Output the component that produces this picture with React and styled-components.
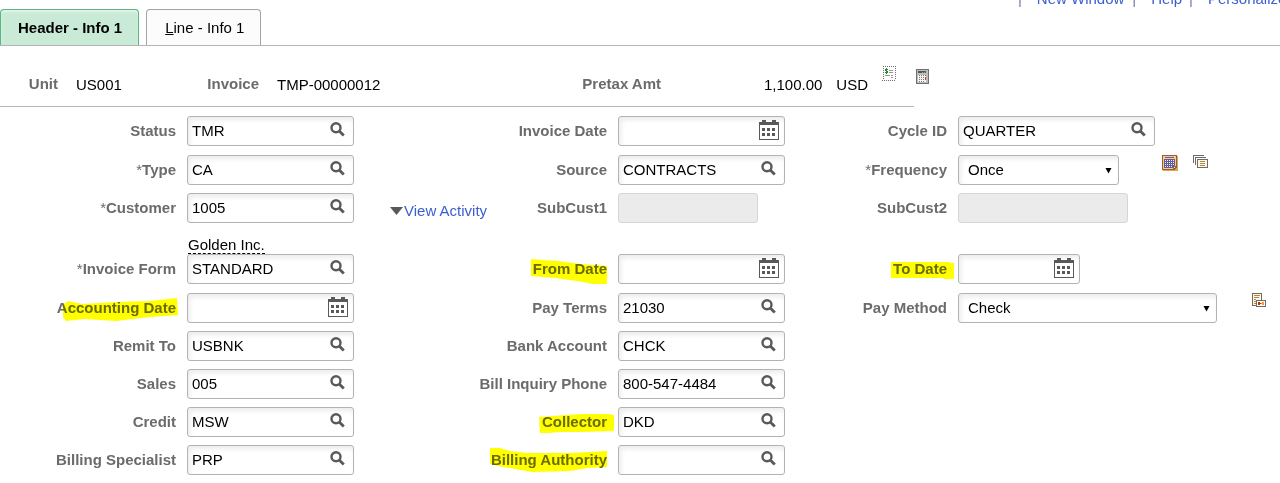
import React from 'react';
import styled, { createGlobalStyle, css } from 'styled-components';

const GlobalStyle = createGlobalStyle`
  * { box-sizing: border-box; }
  body {
    margin: 0;
    background: #fff;
    color: #000;
    font: 15px/18px "Liberation Sans", Arial, sans-serif;
    overflow-x: hidden;
  }
  button, input, select { font: inherit; color: inherit; }
`;

/* ---------- page header ---------- */

const UtilityBar = styled.nav`
  display: flex;
  justify-content: flex-end;
  align-items: flex-end;
  height: 9px;
  padding-bottom: 1px;
  overflow: hidden;
  color: #6f7fa8;
`;

const UtilityLink = styled.a`
  flex: none;
  width: ${(p) => p.$width || 'auto'};
  margin-left: ${(p) => p.$lead || '15px'};
  margin-right: ${(p) => p.$trail || '0'};
  color: #3c5fcf;
  text-decoration: none;
  white-space: nowrap;
`;

const TabBar = styled.div`
  display: flex;
  gap: 7px;
  border-bottom: 1px solid #b4b4b4;
`;

const Tab = styled.button`
  height: 36px;
  padding: 0 16px 0 18px;
  border: 1px solid #a3a3a3;
  border-bottom: 0;
  border-radius: 4px 4px 0 0;
  background: #fcfcfc;
  ${(p) => p.$active && css`
    padding: 0 16px 0 17px;
    border-color: #5bb583;
    background: #c8ead7;
    box-shadow: inset 0 2px 2px #e4f5eb;
    font-weight: bold;
  `}
`;

/* ---------- invoice summary ---------- */

const SummaryRow = styled.section`
  display: flex;
  align-items: flex-start;
  gap: 2px;
  margin-bottom: 9px;
`;

const Summary = styled.dl`
  flex: 0 1 914px;
  display: grid;
  grid-template-columns: 58px 112fr 53px 280fr 86px 235fr;
  column-gap: 18px;
  height: 61px;
  margin: 0;
  border-bottom: 1px solid #b4b4b4;
`;

const SummaryLabel = styled.dt`
  padding-top: 30px;
  color: #6b6b6b;
  font-weight: bold;
  line-height: 16px;
  text-align: right;
  white-space: nowrap;
`;

const SummaryValue = styled.dd`
  margin: 0;
  padding-top: 30px;
`;

const AmountValue = styled(SummaryValue)`
  display: flex;
  justify-content: flex-end;
  align-items: flex-start;
  gap: 14px;
  padding: 20px 18px 0 0;
`;

const AmountText = styled.span`
  padding-top: 10px;
`;

const IconButton = styled.button`
  flex: none;
  display: block;
  margin: ${(p) => p.$margin || '0'};
  padding: 0;
  border: 0;
  background: none;
  line-height: 0;
  svg { display: block; }
`;

/* ---------- form ---------- */

const Row = styled.div`
  display: grid;
  grid-template-columns: 176px 259fr 150px 208fr 110px 322fr;
  column-gap: 11px;
  margin-bottom: ${(p) => p.$gap || '8px'};
`;

const Label = styled.label`
  grid-column: ${(p) => p.$col};
  position: relative;
  padding-top: 6px;
  color: #6b6b6b;
  font-weight: bold;
  text-align: right;
  white-space: nowrap;
`;

const Required = styled.span`
  font-weight: normal;
`;

const Marker = styled.svg`
  position: absolute;
  top: 0;
  right: 0;
  overflow: visible;
  mix-blend-mode: multiply;
  pointer-events: none;
`;

const Cell = styled.div`
  display: flex;
  align-items: flex-start;
  min-width: 0;
`;

const box = css`
  flex: none;
  width: ${(p) => p.$width || '167px'};
  height: 30px;
  border: 1px solid #b3b3b3;
  border-radius: 3px;
  background: #fff;
  box-shadow: inset 2px 3px 5px #ececec;
`;

const FieldBox = styled.div`
  ${box}
  display: flex;
  align-items: flex-start;
`;

const TextInput = styled.input`
  flex: 1;
  min-width: 0;
  height: 26px;
  padding: 0 0 0 4px;
  border: 0;
  background: none;
  outline: 0;
`;

const ReadOnlyInput = styled.input`
  ${box}
  border-color: #d6d6d6;
  background: #ebebeb;
  box-shadow: none;
`;

const SelectBox = styled.div`
  ${box}
  display: flex;
  align-items: center;
  padding-right: 6px;
`;

const Select = styled.select`
  flex: 1;
  min-width: 0;
  height: 28px;
  padding: 0 0 0 9px;
  border: 0;
  background: none;
  appearance: none;
`;

const ActivityLink = styled.a`
  display: flex;
  align-items: center;
  flex: none;
  gap: 1px;
  margin: 9px 0 0 36px;
  color: #3c5fcf;
  text-decoration: none;
`;

const CustomerName = styled.div`
  grid-column: 2;
  justify-self: start;
  margin: 5px 0 0 1px;
  border-bottom: 1px dashed #000;
  line-height: 17px;
`;

/* ---------- icons ---------- */

const SearchIcon = () => (
  <svg width="15" height="15" viewBox="0 0 15 15" fill="none" stroke="#595959">
    <circle cx="6" cy="5.800" r="4.500" strokeWidth="2.400" />
    <path d="M9.200 9 13.800 13.600" strokeWidth="2.800" />
  </svg>
);

const CalendarIcon = () => (
  <svg width="20" height="20" viewBox="0 0 20 20" fill="#595959" shapeRendering="crispEdges">
    <path d="M3 0h4v2h6V0h4v2h3v18H0V2h3zM1 5v14h18V5z" fillRule="evenodd" />
    <path d="M3 8h3v3H3zM8 8h3v3H8zM13 8h3v3h-3zM3 13h3v3H3zM8 13h3v3H8zM13 13h3v3h-3z" />
  </svg>
);

const ArrowIcon = () => (
  <svg width="7" height="7" viewBox="0 0 7 7">
    <path d="M.5 1H6.500L3.500 6.500z" fill="#000" />
  </svg>
);

const ExpandIcon = () => (
  <svg width="13" height="8" viewBox="0 0 13 8">
    <path d="M0 0H13L6.500 8z" fill="#595959" />
  </svg>
);

const ReceiptIcon = () => (
  <svg width="14" height="15" viewBox="0 0 14 15" shapeRendering="crispEdges" fill="none">
    <path d="M1 .5H14M13.500 2V14M0 14.500H14M1.500 2V14" stroke="#707070" strokeDasharray="1 1" />
    <path d="M4 2h1v1h1v1H5v1h1v2H5v1H4V7H3V6h1V5H3V3h1z" fill="#218c2e" />
    <path d="M7 4.500h4M7 6.500h4M3 9.500h5M9 9.500h2M9 11.500h2" stroke="#999" />
  </svg>
);

const CalculatorIcon = () => (
  <svg width="13" height="15" viewBox="0 0 13 15" shapeRendering="crispEdges">
    <path d="M0 0h13v15H0z" fill="#6f6f6f" />
    <path d="M1 1h11v13H1z" fill="#bdbdbd" />
    <path d="M2 2h8v2H2z" fill="#555" />
    <path d="M6 3h1v1H6zM8 3h1v1H8z" fill="#5bd06b" />
    <path d="M2 6h8v7H2z" fill="#f4f4f4" />
    <path d="M3 6.500h7M3 8.500h5M3 10.500h5M3 12.500h5" stroke="#777" strokeDasharray="1 1" />
    <path d="M9 8h1v3H9z" fill="#d33" />
  </svg>
);

const ScheduleIcon = () => (
  <svg width="16" height="16" viewBox="0 0 16 16" shapeRendering="crispEdges">
    <path d="M1 1h15v15H1z" fill="#d9a662" />
    <path d="M0 0h15v12l-3 3H0z" fill="#96602f" />
    <path d="M1 1h13v10l-3 3H1z" fill="#fbc98f" />
    <path d="M3 2h9v1H3z" fill="#62629a" />
    <path d="M2 4h11v9H2z" fill="#5c5ca6" />
    <path d="M3 5.500h9M3 7.500h9M3 9.500h9M3 11.500h7" stroke="#fff0dc" strokeDasharray="1 1" />
    <path d="M11 15v-4h4z" fill="#fff4b8" stroke="#96602f" />
  </svg>
);

const CopyIcon = () => (
  <svg width="15" height="13" viewBox="0 0 15 13" shapeRendering="crispEdges" fill="none">
    <path d="M.5 8V.5H11M2.500 10V2.500H13" stroke="#6f6a62" />
    <path d="M4.500 4.500h10v8h-10z" fill="#fff6e0" stroke="#6f6a62" />
    <path d="M7 6.500h5M7 8.500h5M7 10.500h5" stroke="#a58a5c" />
  </svg>
);

const PaymentIcon = () => (
  <svg width="14" height="14" viewBox="0 0 14 14" shapeRendering="crispEdges" fill="none">
    <path d="M.5.5h9v12h-9z" fill="#fff6e0" stroke="#77695a" />
    <path d="M2 2.500h6M2 4.500h5M2 6.500h2M2 8.500h2M2 10.500h2" stroke="#a58a5c" />
    <path d="M4.500 7.500h9v6h-9z" fill="#fff" stroke="#77695a" />
    <path d="M6 9h2v1h1v1H8v1H6z" fill="#d3202c" />
    <path d="M10 9h2v3h-2v-1H9v-1h1z" fill="#f0a020" />
  </svg>
);

/* ---------- composed parts ---------- */

const MARKS = {
  accountingDate: '37,12 42,8 56,11 91,9 124,8 151,5 152,22 124,24 90,28 59,26 40,28 37,24',
  fromDate: '74,5 86,6 101,7 124,10 150,12 150,30 136,30 120,27 98,24 74,22',
  toDate: '94,8 153,8 153,9 157,9 157,25 147,25 147,24 94,24',
  collector: '82,10 95,9 125,7 150,7 157,8 157,24 125,25 103,25 92,26 83,26',
  billingAuthority: '33,3 43,3 53,6 70,8 113,8 131,7 150,6 150,22 130,23 113,26 75,27 46,22 33,19',
};

const FieldLabel = ({ id, text, required, mark, col }) => (
  <Label htmlFor={id} $col={col}>
    {required && <Required>*</Required>}
    {text}
    {mark && (
      <Marker width="150" height="30" viewBox="0 0 150 30" aria-hidden="true">
        <polygon points={MARKS[mark]} fill="#ffff00" />
      </Marker>
    )}
  </Label>
);

const LookupField = ({ id, text, value, required, mark, width, col, children }) => (
  <>
    <FieldLabel id={id} text={text} required={required} mark={mark} col={col} />
    <Cell>
      <FieldBox $width={width}>
        <TextInput id={id} defaultValue={value} />
        <IconButton type="button" aria-label={`Look up ${text}`} $margin="5px 8px 0 0">
          <SearchIcon />
        </IconButton>
      </FieldBox>
      {children}
    </Cell>
  </>
);

const DateField = ({ id, text, mark, width, col }) => (
  <>
    <FieldLabel id={id} text={text} mark={mark} col={col} />
    <Cell>
      <FieldBox $width={width}>
        <TextInput id={id} />
        <IconButton type="button" aria-label={`Choose ${text}`} $margin="3px 5px 0 0">
          <CalendarIcon />
        </IconButton>
      </FieldBox>
    </Cell>
  </>
);

const DisabledField = ({ id, text, width }) => (
  <>
    <FieldLabel id={id} text={text} />
    <Cell>
      <ReadOnlyInput id={id} disabled $width={width} />
    </Cell>
  </>
);

const SelectField = ({ id, text, required, options, width, children }) => (
  <>
    <FieldLabel id={id} text={text} required={required} />
    <Cell>
      <SelectBox $width={width}>
        <Select id={id}>
          {options.map((o) => <option key={o}>{o}</option>)}
        </Select>
        <ArrowIcon />
      </SelectBox>
      {children}
    </Cell>
  </>
);

export default function App() {
  return (
    <>
      <GlobalStyle />
      <UtilityBar>
        |
        <UtilityLink href="#new-window" $trail="8px">New Window</UtilityLink>
        |
        <UtilityLink href="#help" $trail="7px">Help</UtilityLink>
        |
        <UtilityLink href="#personalize" $width="72px">Personalize Page</UtilityLink>
      </UtilityBar>
      <TabBar>
        <Tab type="button" $active>Header - Info 1</Tab>
        <Tab type="button"><u>L</u>ine - Info 1</Tab>
      </TabBar>

      <SummaryRow>
        <Summary>
          <SummaryLabel>Unit</SummaryLabel>
          <SummaryValue>US001</SummaryValue>
          <SummaryLabel>Invoice</SummaryLabel>
          <SummaryValue>TMP-00000012</SummaryValue>
          <SummaryLabel>Pretax Amt</SummaryLabel>
          <AmountValue>
            <AmountText>1,100.00</AmountText>
            <AmountText>USD</AmountText>
            <IconButton type="button" aria-label="Bill summary"><ReceiptIcon /></IconButton>
          </AmountValue>
        </Summary>
        <IconButton type="button" aria-label="Calculate" $margin="23px 0 0"><CalculatorIcon /></IconButton>
      </SummaryRow>

      <form>
        <Row $gap="9px">
          <LookupField id="status" text="Status" value="TMR" />
          <DateField id="invoice-date" text="Invoice Date" />
          <LookupField id="cycle" text="Cycle ID" value="QUARTER" width="197px" />
        </Row>
        <Row>
          <LookupField id="type" text="Type" value="CA" required />
          <LookupField id="source" text="Source" value="CONTRACTS" />
          <SelectField id="frequency" text="Frequency" required options={['Once']} width="161px">
            <IconButton type="button" aria-label="Schedule" $margin="0 0 0 43px"><ScheduleIcon /></IconButton>
            <IconButton type="button" aria-label="Copy" $margin="0 0 0 15px"><CopyIcon /></IconButton>
          </SelectField>
        </Row>
        <Row>
          <LookupField id="customer" text="Customer" value="1005" required>
            <ActivityLink href="#activity"><ExpandIcon />View Activity</ActivityLink>
          </LookupField>
          <DisabledField id="subcust1" text="SubCust1" width="140px" />
          <DisabledField id="subcust2" text="SubCust2" width="170px" />
        </Row>
        <Row $gap="0">
          <CustomerName>Golden Inc.</CustomerName>
        </Row>
        <Row $gap="9px">
          <LookupField id="form" text="Invoice Form" value="STANDARD" required />
          <DateField id="from-date" text="From Date" mark="fromDate" />
          <DateField id="to-date" text="To Date" mark="toDate" width="122px" />
        </Row>
        <Row>
          <DateField id="accounting-date" text="Accounting Date" mark="accountingDate" />
          <LookupField id="terms" text="Pay Terms" value="21030" />
          <SelectField id="method" text="Pay Method" options={['Check']} width="259px">
            <IconButton type="button" aria-label="Payment details" $margin="0 0 0 35px"><PaymentIcon /></IconButton>
          </SelectField>
        </Row>
        <Row>
          <LookupField id="remit" text="Remit To" value="USBNK" />
          <LookupField id="bank" text="Bank Account" value="CHCK" />
        </Row>
        <Row>
          <LookupField id="sales" text="Sales" value="005" />
          <LookupField id="phone" text="Bill Inquiry Phone" value="800-547-4484" />
        </Row>
        <Row>
          <LookupField id="credit" text="Credit" value="MSW" />
          <LookupField id="collector" text="Collector" value="DKD" mark="collector" />
        </Row>
        <Row>
          <LookupField id="specialist" text="Billing Specialist" value="PRP" />
          <LookupField id="authority" text="Billing Authority" mark="billingAuthority" />
        </Row>
      </form>
    </>
  );
}
